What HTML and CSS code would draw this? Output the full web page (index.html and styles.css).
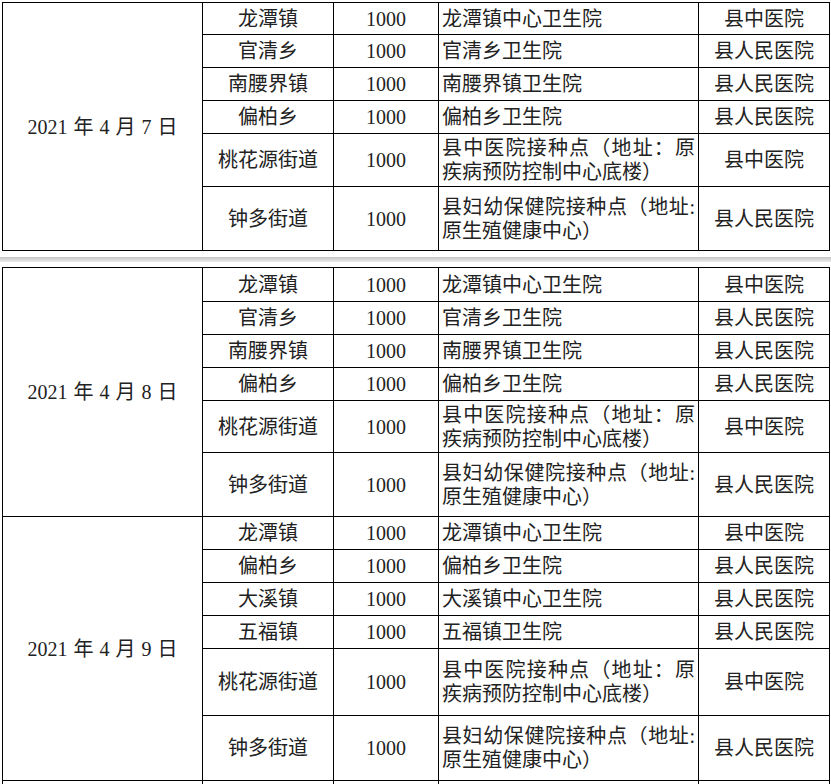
FILE: index.html
```html
<!DOCTYPE html>
<html lang="zh-CN">
<head>
<meta charset="utf-8">
<title>接种安排</title>
<link rel="stylesheet" href="styles.css">
</head>
<body>
<div class="page">
  <table class="sched">
    <colgroup>
      <col class="c-date"><col class="c-town"><col class="c-num"><col class="c-site"><col class="c-hosp">
    </colgroup>
    <tbody>
      <tr class="h32"><td class="date" rowspan="6">2021 年 4 月 7 日</td><td>龙潭镇</td><td>1000</td><td class="site">龙潭镇中心卫生院</td><td>县中医院</td></tr>
      <tr class="h33"><td>官清乡</td><td>1000</td><td class="site">官清乡卫生院</td><td>县人民医院</td></tr>
      <tr class="h33"><td>南腰界镇</td><td>1000</td><td class="site">南腰界镇卫生院</td><td>县人民医院</td></tr>
      <tr class="h33"><td>偏柏乡</td><td>1000</td><td class="site">偏柏乡卫生院</td><td>县人民医院</td></tr>
      <tr class="h53"><td>桃花源街道</td><td>1000</td><td class="site">县中医院接种点（地址：原疾病预防控制中心底楼）</td><td>县中医院</td></tr>
      <tr class="h64"><td>钟多街道</td><td>1000</td><td class="site">县妇幼保健院接种点（地址:原生殖健康中心）</td><td>县人民医院</td></tr>
    </tbody>
  </table>

  <div class="divider"></div>

  <table class="sched">
    <colgroup>
      <col class="c-date"><col class="c-town"><col class="c-num"><col class="c-site"><col class="c-hosp">
    </colgroup>
    <tbody>
      <tr class="h34"><td class="date" rowspan="6">2021 年 4 月 8 日</td><td>龙潭镇</td><td>1000</td><td class="site">龙潭镇中心卫生院</td><td>县中医院</td></tr>
      <tr class="h33"><td>官清乡</td><td>1000</td><td class="site">官清乡卫生院</td><td>县人民医院</td></tr>
      <tr class="h33"><td>南腰界镇</td><td>1000</td><td class="site">南腰界镇卫生院</td><td>县人民医院</td></tr>
      <tr class="h33"><td>偏柏乡</td><td>1000</td><td class="site">偏柏乡卫生院</td><td>县人民医院</td></tr>
      <tr class="h52"><td>桃花源街道</td><td>1000</td><td class="site">县中医院接种点（地址：原疾病预防控制中心底楼）</td><td>县中医院</td></tr>
      <tr class="h64"><td>钟多街道</td><td>1000</td><td class="site">县妇幼保健院接种点（地址:原生殖健康中心）</td><td>县人民医院</td></tr>
    </tbody>
    <tbody>
      <tr class="h33"><td class="date" rowspan="6">2021 年 4 月 9 日</td><td>龙潭镇</td><td>1000</td><td class="site">龙潭镇中心卫生院</td><td>县中医院</td></tr>
      <tr class="h33"><td>偏柏乡</td><td>1000</td><td class="site">偏柏乡卫生院</td><td>县人民医院</td></tr>
      <tr class="h33"><td>大溪镇</td><td>1000</td><td class="site">大溪镇中心卫生院</td><td>县人民医院</td></tr>
      <tr class="h33"><td>五福镇</td><td>1000</td><td class="site">五福镇卫生院</td><td>县人民医院</td></tr>
      <tr class="h67"><td>桃花源街道</td><td>1000</td><td class="site">县中医院接种点（地址：原疾病预防控制中心底楼）</td><td>县中医院</td></tr>
      <tr class="h65"><td>钟多街道</td><td>1000</td><td class="site">县妇幼保健院接种点（地址:原生殖健康中心）</td><td>县人民医院</td></tr>
    </tbody>
    <tbody>
      <tr class="h33"><td class="date"></td><td></td><td></td><td class="site"></td><td></td></tr>
    </tbody>
  </table>
</div>
</body>
</html>
```

FILE: styles.css
```css
html, body {
  margin: 0;
  padding: 0;
  background: #ffffff;
}

body {
  font-family: "Liberation Serif", "Noto Sans CJK SC", serif;
  font-size: 20px;
  color: #222222;
  overflow: hidden;
}

.page {
  padding: 2px 0 0 2px;
  width: 829px;
}

.sched {
  border-collapse: collapse;
  table-layout: fixed;
  width: 827px;
}

.c-date { width: 200px; }
.c-town { width: 131px; }
.c-num  { width: 105px; }
.c-site { width: 260px; }
.c-hosp { width: 131px; }

.sched td {
  border: 1px solid #000000;
  padding: 0 3px;
  text-align: center;
  vertical-align: middle;
  line-height: 24px;
  white-space: normal;
}

.sched td.site {
  text-align: justify;
  text-align-last: left;
  padding: 0 3px 0 3px;
}

.sched td.date {
  text-align: center;
  word-spacing: 1px;
}

.h32 { height: 32px; }
.h33 { height: 33px; }
.h34 { height: 34px; }
.h52 { height: 52px; }
.h53 { height: 53px; }
.h64 { height: 64px; }
.h65 { height: 65px; }
.h67 { height: 67px; }

.divider {
  height: 5px;
  margin: 6px 0 5px -2px;
  width: 831px;
  background: linear-gradient(#c4c4c4, #dcdcdc 60%, #ececec);
}
```
